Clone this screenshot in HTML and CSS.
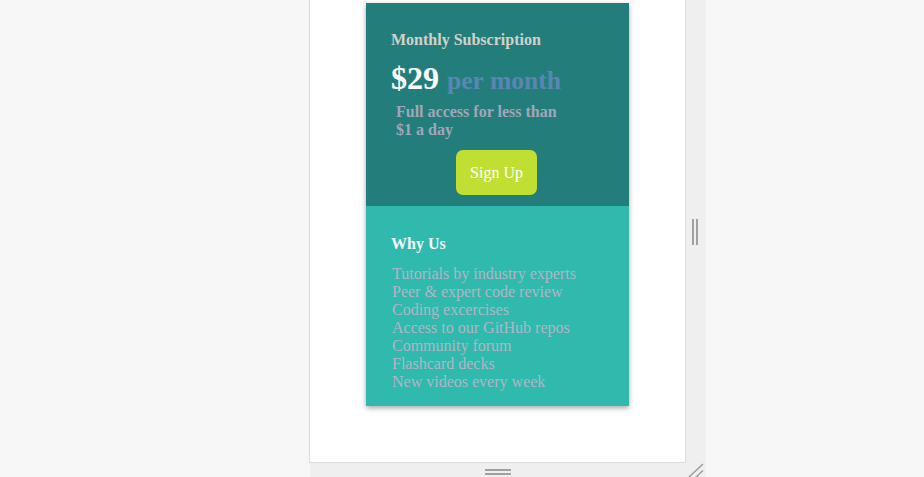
FILE: index.html
```html
<!DOCTYPE html>
<html lang="en">
<head>
<meta charset="utf-8">
<title>Pricing card</title>
<link rel="stylesheet" href="styles.css">
</head>
<body>
  <div class="workspace">
    <div class="device">
      <div class="screen">
        <div class="card">
          <section class="plan">
            <h2 class="plan-title">Monthly Subscription</h2>
            <p class="price"><span class="amount">$29</span> <span class="period">per month</span></p>
            <p class="blurb">Full access for less than $1 a day</p>
            <div class="cta-row"><button class="cta">Sign Up</button></div>
          </section>
          <section class="why">
            <h2 class="why-title">Why Us</h2>
            <ul class="features">
              <li>Tutorials by industry experts</li>
              <li>Peer &amp; expert code review</li>
              <li>Coding excercises</li>
              <li>Access to our GitHub repos</li>
              <li>Community forum</li>
              <li>Flashcard decks</li>
              <li>New videos every week</li>
            </ul>
          </section>
        </div>
      </div>
      <div class="gutter-right"><span class="handle-v"></span></div>
      <div class="gutter-bottom"><span class="handle-h"></span></div>
      <div class="gutter-corner">
        <svg width="20" height="14" viewBox="0 0 20 14" aria-hidden="true">
          <line x1="2" y1="15" x2="17" y2="1" stroke="#9a9a9a" stroke-width="1.4"/>
          <line x1="9" y1="15" x2="17" y2="7.5" stroke="#9a9a9a" stroke-width="1.4"/>
        </svg>
      </div>
    </div>
  </div>
</body>
</html>
```

FILE: styles.css
```css
* { box-sizing: border-box; }

html, body {
  margin: 0;
  padding: 0;
  height: 477px;
  overflow: hidden;
}

body {
  background: #f7f7f7;
  font-family: "Liberation Serif", "Times New Roman", serif;
}

.workspace {
  display: flex;
  padding-left: 309px;
}

.device {
  display: grid;
  grid-template-columns: 377px 20px;
  grid-template-rows: 463px 14px;
}

.screen {
  background: #fff;
  border-left: 1px solid #dcdcdc;
  border-right: 1px solid #dcdcdc;
  border-bottom: 1px solid #dcdcdc;
  padding-top: 3px;
  display: flex;
  flex-direction: column;
  align-items: center;
}

.gutter-right {
  background: #efefef;
  display: flex;
  align-items: center;
  justify-content: center;
}

.handle-v {
  width: 6px;
  height: 26px;
  border-left: 2px solid #a0a0a0;
  border-right: 2px solid #a0a0a0;
  margin-left: -2px;
}

.gutter-bottom {
  background: #efefef;
  margin-left: 1px;
  display: flex;
  justify-content: center;
  padding-top: 6px;
}

.handle-h {
  width: 26px;
  height: 6px;
  border-top: 2px solid #a0a0a0;
  border-bottom: 2px solid #a0a0a0;
}

.gutter-corner {
  background: #efefef;
  display: flex;
}

/* card */
.card {
  width: 263px;
  box-shadow: 0 2px 5px rgba(0, 0, 0, 0.35);
}

.plan {
  background: #237e7b;
  padding: 28px 25px 11px;
}

.plan-title,
.why-title {
  margin: 0;
  font-size: 16px;
  line-height: 18px;
  font-weight: bold;
}

.plan-title { color: #d3d1c9; }

.price {
  margin: 11px 0 0;
  font-size: 32px;
  line-height: 37px;
  font-weight: bold;
}

.amount {
  color: #fff;
}

.period {
  font-size: 25.6px;
  color: #5a86b4;
}

.blurb {
  margin: 4px 0 0 5px;
  max-width: 170px;
  font-size: 16px;
  line-height: 18px;
  font-weight: bold;
  color: #a2a6b9;
}

.cta-row {
  margin-top: 11px;
  display: flex;
  justify-content: center;
}

.cta {
  height: 45px;
  padding: 0 14px;
  border: none;
  border-radius: 7px;
  background: #c1df32;
  color: #fff;
  font-family: inherit;
  font-size: 16px;
  line-height: 18px;
  margin-left: -2px;
}

.why {
  background: #2fbaad;
  padding: 29px 25px 15px;
}

.why-title { color: #f4f8f8; }

.features {
  list-style: none;
  margin: 12px 0 0 1px;
  padding: 0;
  font-size: 16px;
  line-height: 18px;
  color: #b3b5c4;
}
```
